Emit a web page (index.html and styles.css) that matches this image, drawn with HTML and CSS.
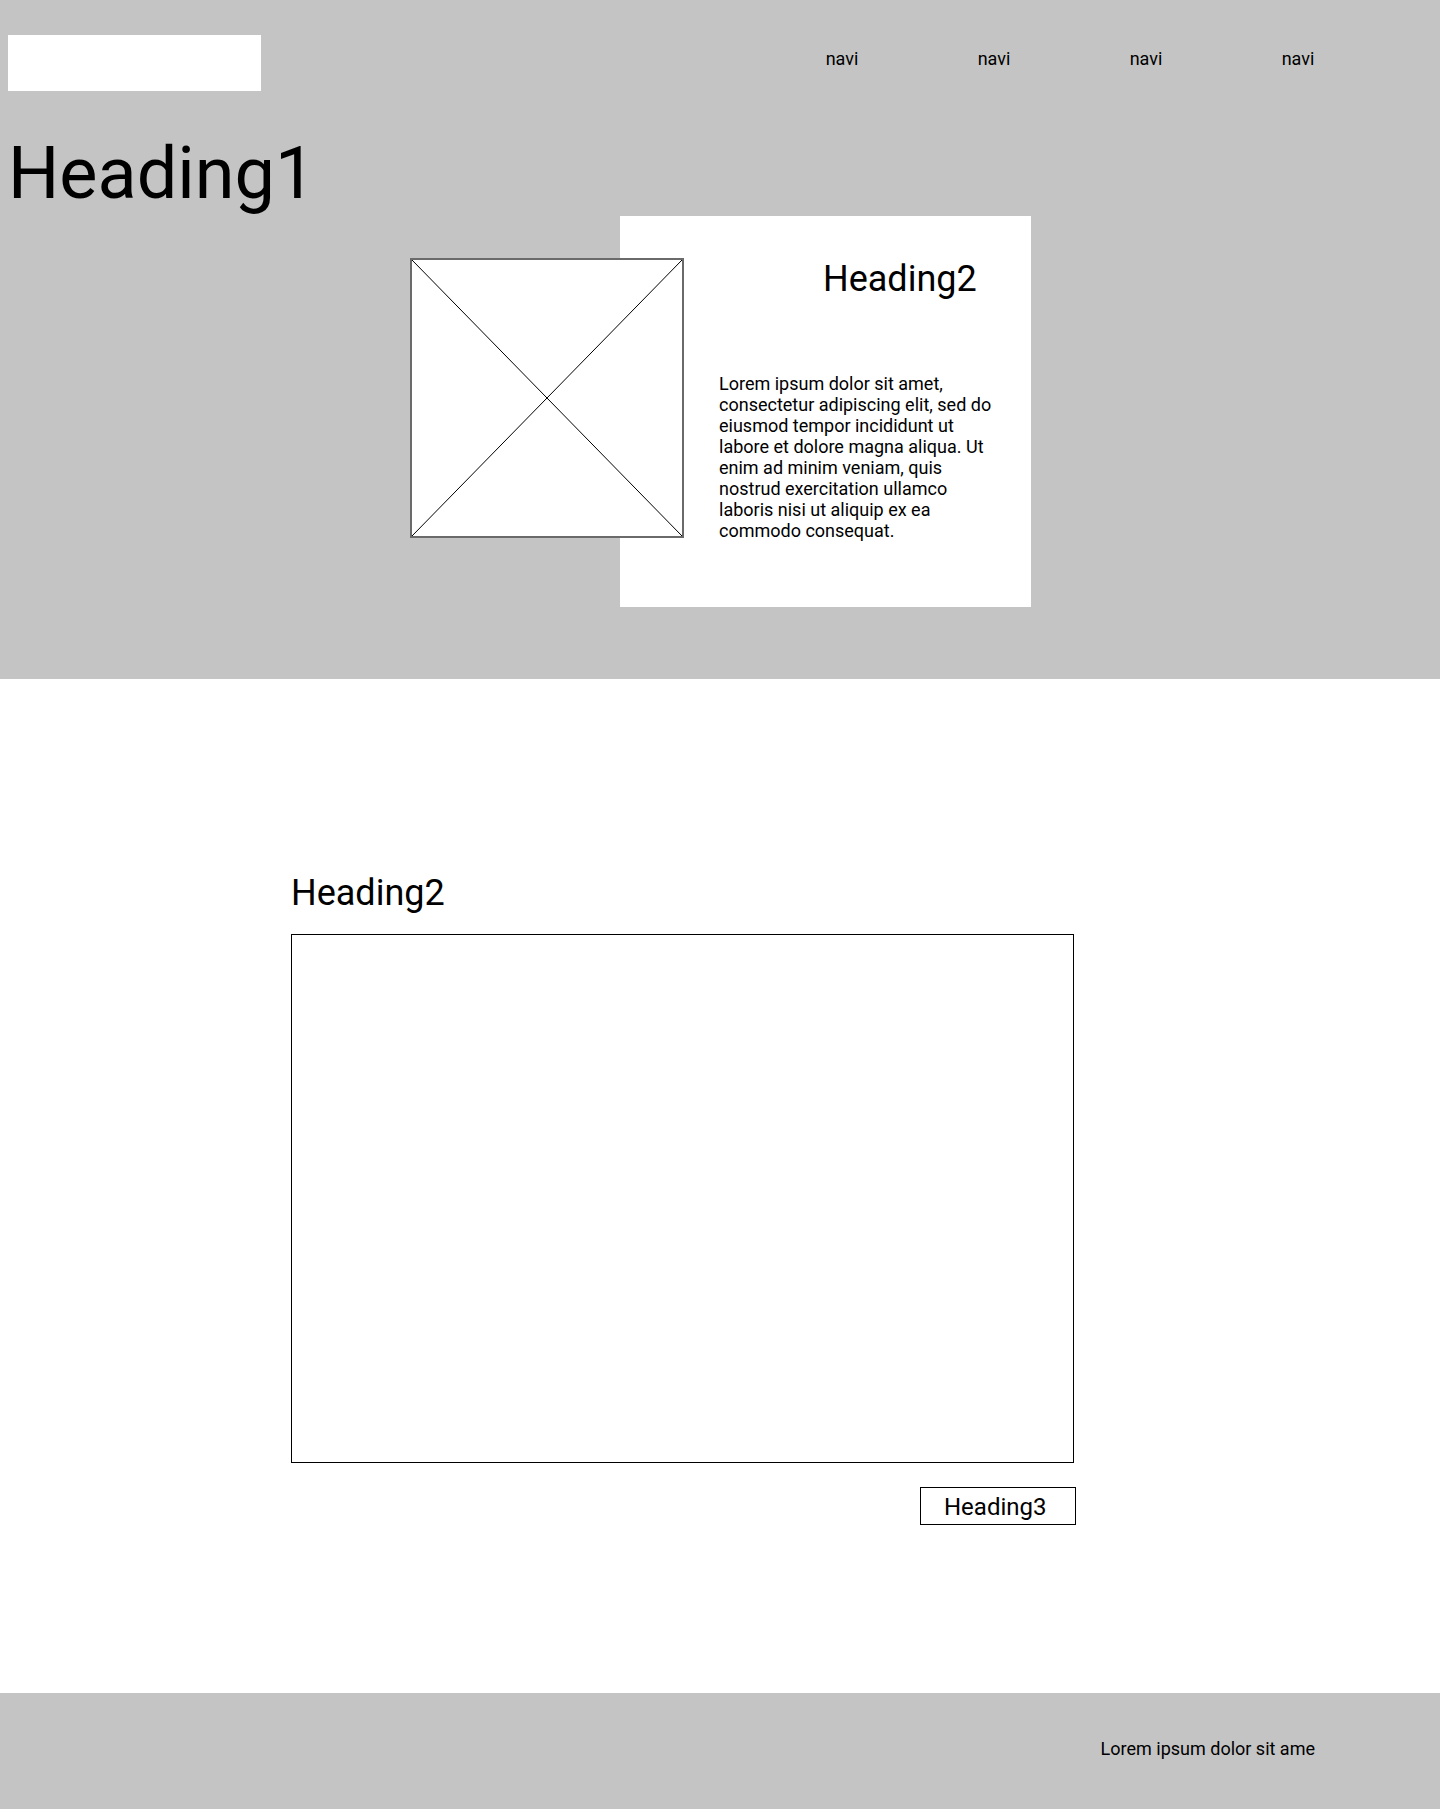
FILE: index.html
```
<!DOCTYPE html>
<html>
<head>
<meta charset="utf-8">
<title>wireframe</title>
<link rel="stylesheet" href="styles.css">
</head>
<body>
<div class="hero">
  <div class="top">
    <div class="logo"></div>
    <ul class="nav">
      <li>navi</li>
      <li>navi</li>
      <li>navi</li>
      <li>navi</li>
    </ul>
  </div>
  <h1>Heading1</h1>
  <div class="feature">
    <div class="pic">
      <svg viewBox="0 0 100 100" preserveAspectRatio="none">
        <line x1="0" y1="0" x2="100" y2="100" vector-effect="non-scaling-stroke"/>
        <line x1="100" y1="0" x2="0" y2="100" vector-effect="non-scaling-stroke"/>
      </svg>
    </div>
    <div class="card">
      <h2>Heading2</h2>
      <p>Lorem ipsum dolor sit amet, consectetur adipiscing elit, sed do eiusmod tempor incididunt ut labore et dolore magna aliqua. Ut enim ad minim veniam, quis nostrud exercitation ullamco laboris nisi ut aliquip ex ea commodo consequat.</p>
    </div>
  </div>
</div>

<div class="main">
  <div class="wrap">
    <h2>Heading2</h2>
    <div class="frame"></div>
    <div class="more">Heading3</div>
  </div>
</div>

<div class="foot">Lorem ipsum dolor sit ame</div>
</body>
</html>
```

FILE: styles.css
```
*{ padding:0; margin:0; list-style:none; box-sizing:border-box;}
body{ font-family:Roboto, "Liberation Sans", sans-serif; color:#000; background:#fff;}

.hero{ background:#c4c4c4; padding-bottom:72px;}
.top{ display:flex; justify-content:space-between; align-items:flex-start; padding:35px 66px 0 8px;}
.logo{ width:253px; height:56px; background:#fff;}
.nav{ display:flex; margin-top:13px;}
.nav li{ width:152px; text-align:center; font-size:18px;}

.hero h1{ font-size:72px; font-weight:400; margin-top:40px; padding-left:8px;}

.feature{ display:flex; align-items:flex-start; padding-left:410px;}
.pic{ width:274px; height:280px; margin-top:42px; border:2px solid #6a6a6a; background:#fff; position:relative; z-index:1; flex:none;}
.pic svg{ display:block; width:100%; height:100%;}
.pic line{ stroke:#000; stroke-width:1;}
.card{ width:411px; height:391px; margin-left:-64px; background:#fff; padding:42px 0 0 99px; flex:none;}
.card h2{ font-size:36px; font-weight:400; margin-left:104px;}
.card p{ width:280px; font-size:18px; line-height:21px; margin-top:73px;}

.main{ padding:193px 0 168px 291px;}
.wrap{ width:785px; display:flex; flex-direction:column;}
.wrap h2{ font-size:36px; font-weight:400; margin-bottom:20px;}
.frame{ width:783px; height:529px; border:1px solid #000;}
.more{ align-self:flex-end; width:156px; height:38px; margin-top:24px; border:1px solid #000; font-size:24px; line-height:28px; padding:5px 0 3px 23px;}

.foot{ height:117px; background:#c4c4c4; font-size:18px; text-align:right; padding:45px 125px 0 0;}
```
